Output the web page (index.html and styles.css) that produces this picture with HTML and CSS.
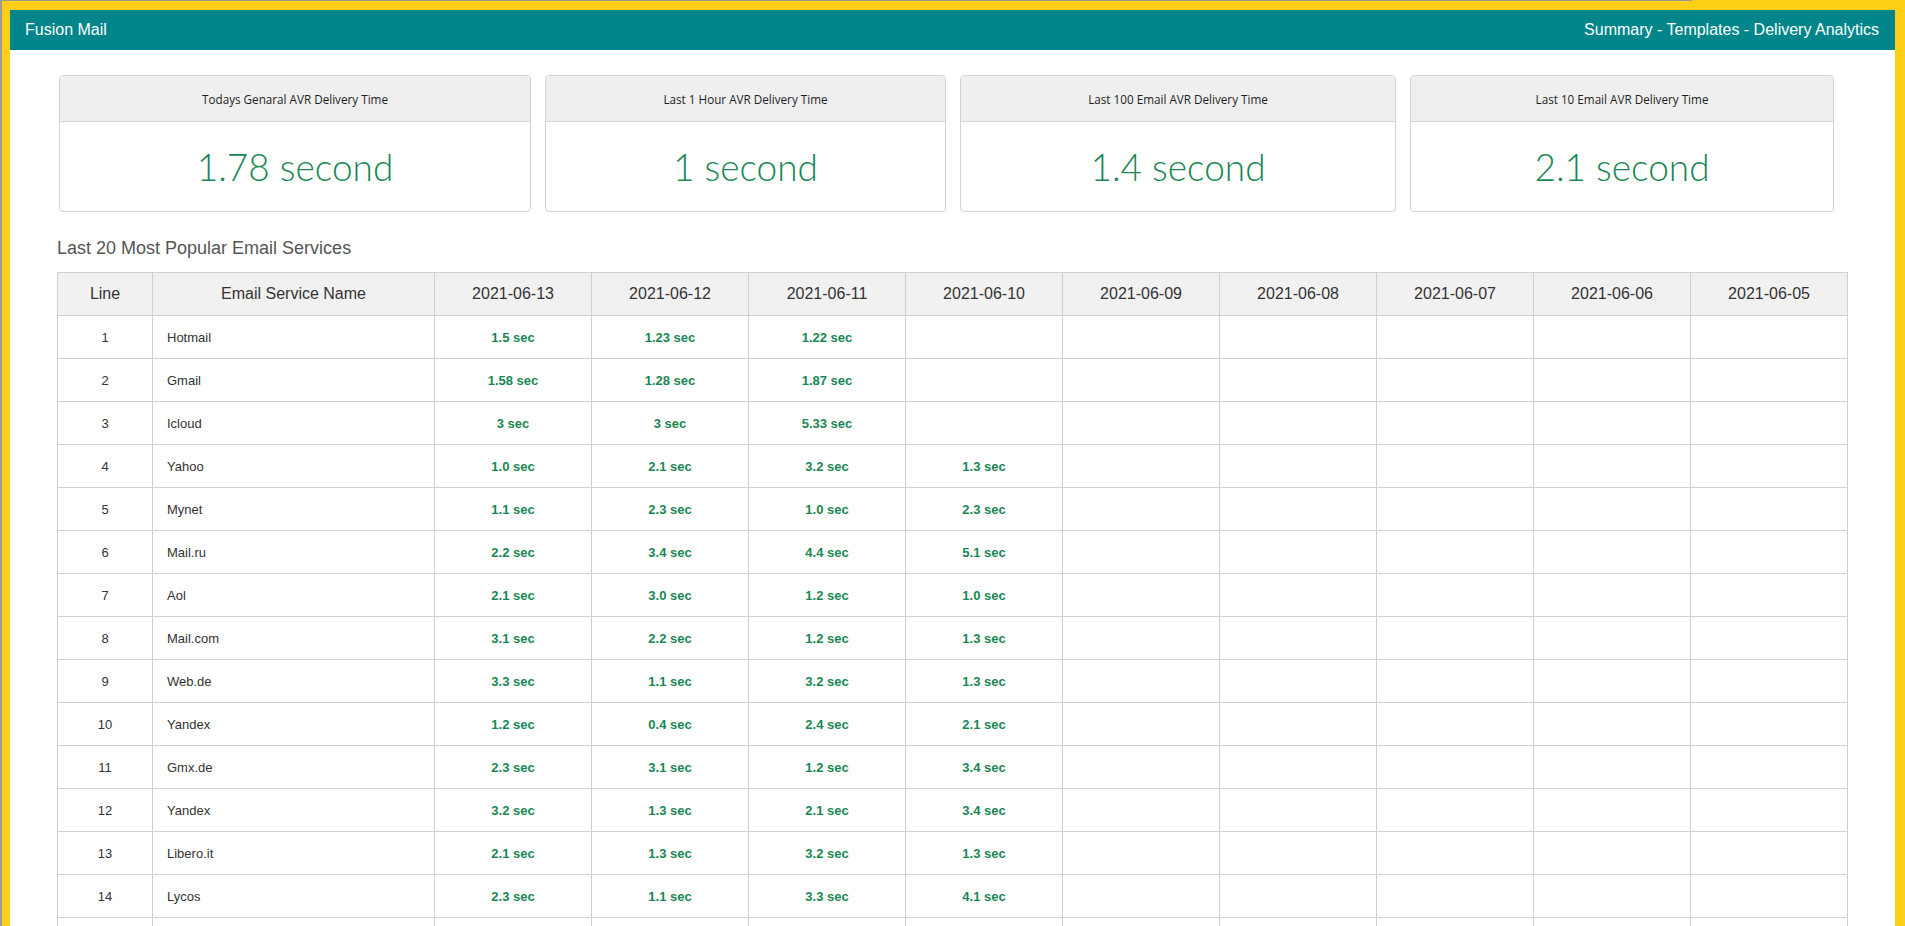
FILE: index.html
```html
<!DOCTYPE html>
<html lang="en">
<head>
<meta charset="UTF-8">
<meta name="viewport" content="width=device-width">
<title>Fusion Mail - Delivery Analytics</title>
<link rel="stylesheet" href="styles.css">
</head>
<body>
<div class="frame">
  <header class="topbar">
    <span class="brand">Fusion Mail</span>
    <nav class="menu">Summary - Templates - Delivery Analytics</nav>
  </header>

  <main class="content">
    <div class="stats">
      <div class="stat">
        <div class="stat-head">Todays Genaral AVR Delivery Time</div>
        <div class="stat-value">1.78 second</div>
      </div>
      <div class="stat">
        <div class="stat-head">Last 1 Hour AVR Delivery Time</div>
        <div class="stat-value">1 second</div>
      </div>
      <div class="stat">
        <div class="stat-head">Last 100 Email AVR Delivery Time</div>
        <div class="stat-value">1.4 second</div>
      </div>
      <div class="stat">
        <div class="stat-head">Last 10 Email AVR Delivery Time</div>
        <div class="stat-value">2.1 second</div>
      </div>
    </div>

    <h3 class="section-title">Last 20 Most Popular Email Services</h3>

    <table class="services">
      <colgroup>
        <col class="col-line">
        <col class="col-name">
        <col span="9" class="col-date">
      </colgroup>
      <thead>
        <tr>
          <th>Line</th>
          <th>Email Service Name</th>
          <th>2021-06-13</th>
          <th>2021-06-12</th>
          <th>2021-06-11</th>
          <th>2021-06-10</th>
          <th>2021-06-09</th>
          <th>2021-06-08</th>
          <th>2021-06-07</th>
          <th>2021-06-06</th>
          <th>2021-06-05</th>
        </tr>
      </thead>
      <tbody>
        <tr><td>1</td><td class="name">Hotmail</td><td class="sec">1.5 sec</td><td class="sec">1.23 sec</td><td class="sec">1.22 sec</td><td></td><td></td><td></td><td></td><td></td><td></td></tr>
        <tr><td>2</td><td class="name">Gmail</td><td class="sec">1.58 sec</td><td class="sec">1.28 sec</td><td class="sec">1.87 sec</td><td></td><td></td><td></td><td></td><td></td><td></td></tr>
        <tr><td>3</td><td class="name">Icloud</td><td class="sec">3 sec</td><td class="sec">3 sec</td><td class="sec">5.33 sec</td><td></td><td></td><td></td><td></td><td></td><td></td></tr>
        <tr><td>4</td><td class="name">Yahoo</td><td class="sec">1.0 sec</td><td class="sec">2.1 sec</td><td class="sec">3.2 sec</td><td class="sec">1.3 sec</td><td></td><td></td><td></td><td></td><td></td></tr>
        <tr><td>5</td><td class="name">Mynet</td><td class="sec">1.1 sec</td><td class="sec">2.3 sec</td><td class="sec">1.0 sec</td><td class="sec">2.3 sec</td><td></td><td></td><td></td><td></td><td></td></tr>
        <tr><td>6</td><td class="name">Mail.ru</td><td class="sec">2.2 sec</td><td class="sec">3.4 sec</td><td class="sec">4.4 sec</td><td class="sec">5.1 sec</td><td></td><td></td><td></td><td></td><td></td></tr>
        <tr><td>7</td><td class="name">Aol</td><td class="sec">2.1 sec</td><td class="sec">3.0 sec</td><td class="sec">1.2 sec</td><td class="sec">1.0 sec</td><td></td><td></td><td></td><td></td><td></td></tr>
        <tr><td>8</td><td class="name">Mail.com</td><td class="sec">3.1 sec</td><td class="sec">2.2 sec</td><td class="sec">1.2 sec</td><td class="sec">1.3 sec</td><td></td><td></td><td></td><td></td><td></td></tr>
        <tr><td>9</td><td class="name">Web.de</td><td class="sec">3.3 sec</td><td class="sec">1.1 sec</td><td class="sec">3.2 sec</td><td class="sec">1.3 sec</td><td></td><td></td><td></td><td></td><td></td></tr>
        <tr><td>10</td><td class="name">Yandex</td><td class="sec">1.2 sec</td><td class="sec">0.4 sec</td><td class="sec">2.4 sec</td><td class="sec">2.1 sec</td><td></td><td></td><td></td><td></td><td></td></tr>
        <tr><td>11</td><td class="name">Gmx.de</td><td class="sec">2.3 sec</td><td class="sec">3.1 sec</td><td class="sec">1.2 sec</td><td class="sec">3.4 sec</td><td></td><td></td><td></td><td></td><td></td></tr>
        <tr><td>12</td><td class="name">Yandex</td><td class="sec">3.2 sec</td><td class="sec">1.3 sec</td><td class="sec">2.1 sec</td><td class="sec">3.4 sec</td><td></td><td></td><td></td><td></td><td></td></tr>
        <tr><td>13</td><td class="name">Libero.it</td><td class="sec">2.1 sec</td><td class="sec">1.3 sec</td><td class="sec">3.2 sec</td><td class="sec">1.3 sec</td><td></td><td></td><td></td><td></td><td></td></tr>
        <tr><td>14</td><td class="name">Lycos</td><td class="sec">2.3 sec</td><td class="sec">1.1 sec</td><td class="sec">3.3 sec</td><td class="sec">4.1 sec</td><td></td><td></td><td></td><td></td><td></td></tr>
        <tr><td>15</td><td class="name">Rambler.ru</td><td class="sec">1.4 sec</td><td class="sec">2.0 sec</td><td class="sec">1.1 sec</td><td class="sec">2.2 sec</td><td></td><td></td><td></td><td></td><td></td></tr>
      </tbody>
    </table>
  </main>
</div>
</body>
</html>
```

FILE: styles.css
```css
html {
  background:
    linear-gradient(#9a9a9a, #9a9a9a) 0 0 / 1692px 1px no-repeat,
    linear-gradient(#9a9a9a, #9a9a9a) 0 0 / 2px 100% no-repeat,
    #fdd017;
  scrollbar-width: none;
}
html::-webkit-scrollbar {
  display: none;
}
body {
  margin: 0;
  padding: 10px 10px 0 10px;
  font-family: "Liberation Sans", Arial, sans-serif;
  color: #333;
}
.frame {
  background: #fff;
  min-height: 1000px;
}

/* top bar */
.topbar {
  height: 40px;
  background: #00868a;
  color: #fff;
  display: flex;
  align-items: center;
  justify-content: space-between;
  padding: 0 16px 0 15px;
  font-size: 16px;
}

.content {
  padding: 25px 48px 0 47px;
}

/* stat cards */
.stats {
  display: grid;
  grid-template-columns: 472px 401px 436px 424px;
  gap: 14px;
  margin-left: 2px;
}
.stat {
  border: 1px solid #d3d3d3;
  border-radius: 4px;
  overflow: hidden;
  font-family: "Open Sans", "Noto Sans", sans-serif;
}
.stat-head {
  height: 45px;
  background: #efefef;
  border-bottom: 1px solid #d6d6d6;
  display: flex;
  align-items: center;
  justify-content: center;
  font-size: 11.7px;
  color: #1e1e1e;
}
.stat-value {
  height: 89px;
  display: flex;
  align-items: center;
  justify-content: center;
  font-family: Lato, "Open Sans", sans-serif;
  font-size: 37px;
  font-weight: 300;
  color: #198754;
}

.section-title {
  margin: 26px 0 14px 0;
  font-size: 18px;
  line-height: 20px;
  font-weight: normal;
  color: #555;
}

/* table */
.services {
  border-collapse: collapse;
  table-layout: fixed;
  width: 1790px;
}
.col-line { width: 95px; }
.col-name { width: 282px; }
.col-date { width: 157px; }
.services th,
.services td {
  border: 1px solid #d0d0d0;
  height: 42px;
  padding: 0 14px;
  text-align: center;
}
.services th {
  background: #f1f1f1;
  font-size: 16px;
  font-weight: normal;
  color: #333;
}
.services td {
  font-size: 13px;
  color: #333;
}
.services td.name {
  text-align: left;
}
.services td.sec {
  font-weight: bold;
  color: #198754;
}
```
